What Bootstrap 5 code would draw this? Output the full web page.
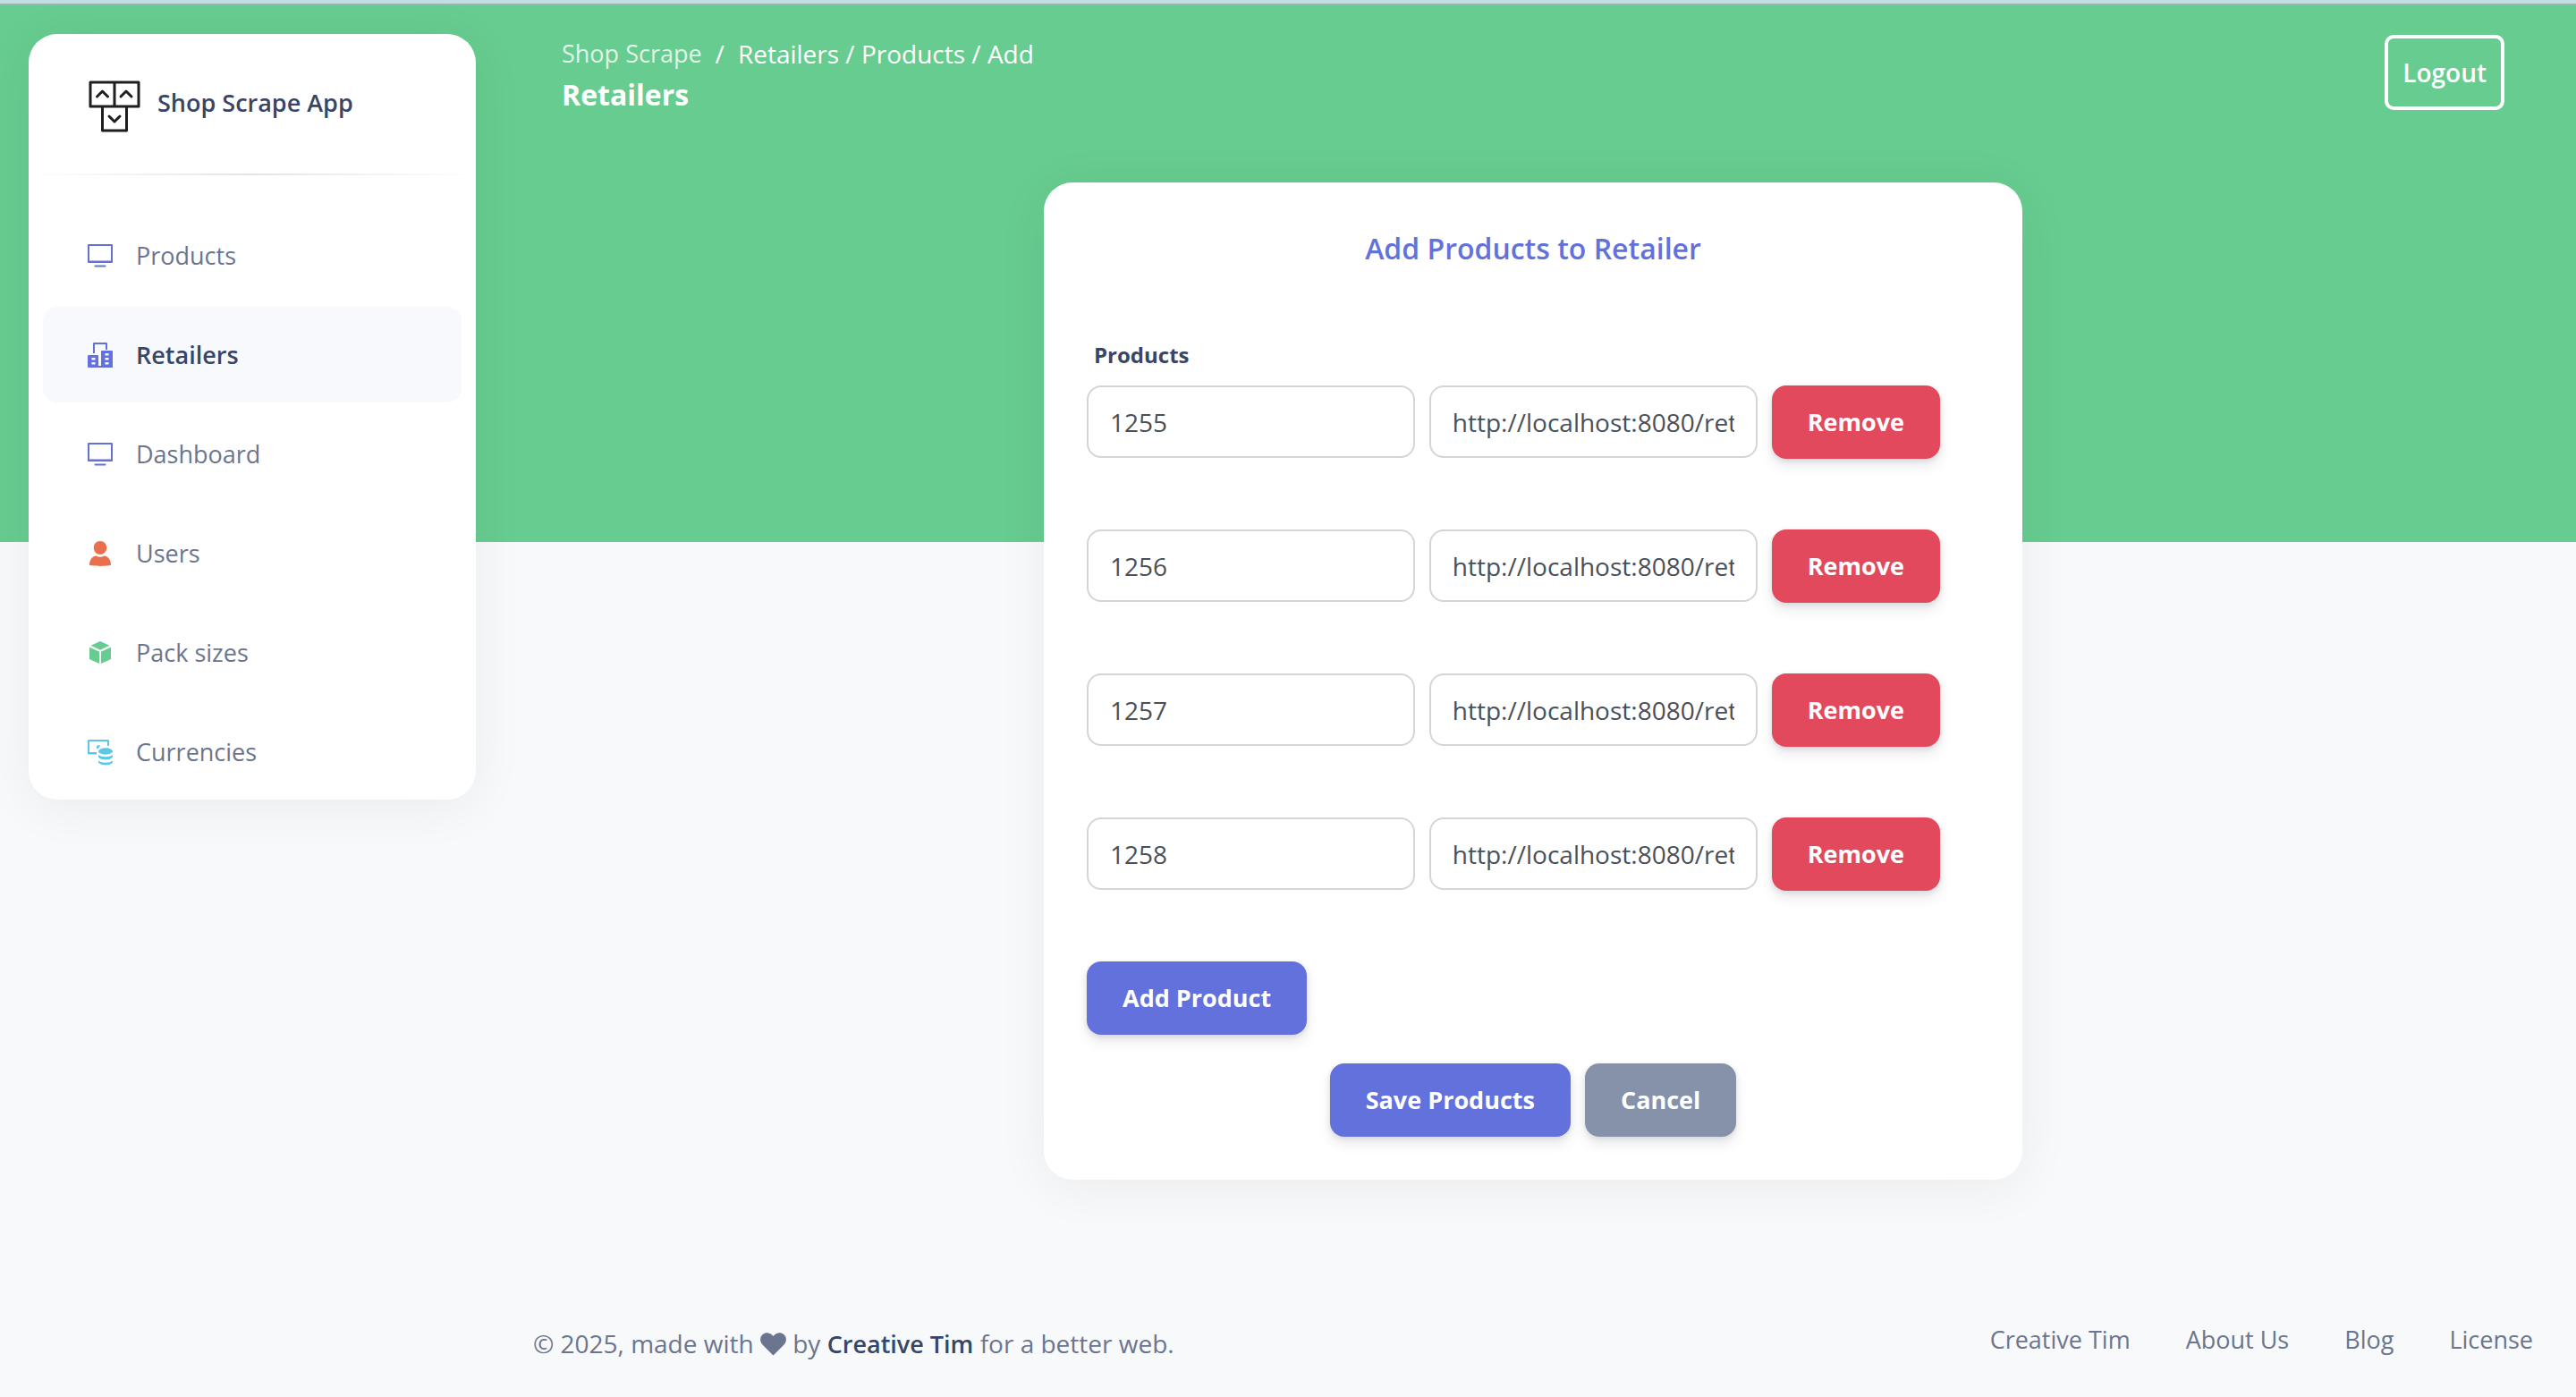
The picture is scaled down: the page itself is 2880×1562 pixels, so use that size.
<!DOCTYPE html>
<html lang="en">
<head>
<meta charset="utf-8">
<meta name="viewport" content="width=device-width, initial-scale=1">
<title>Shop Scrape App</title>
<link href="https://cdn.jsdelivr.net/npm/bootstrap@5.3.0/dist/css/bootstrap.min.css" rel="stylesheet">
<style>
:root{--ink:#384665;--muted:#6b758e;--indigo:#6371dc;--green:#67cc90}
body{font-family:"Open Sans","Noto Sans",sans-serif;font-size:28px;line-height:42px;color:var(--muted);background:#f8f9fb}
a{color:inherit;text-decoration:none}
.top-strip{height:6px;background:#bfdfe2;border-bottom:2px solid #9fb1b8}
.shell{background:linear-gradient(var(--green),var(--green)) 0 0/100% 600px no-repeat}
.soft-shadow{box-shadow:0 8px 60px rgba(0,0,0,.06)}
.side-panel{width:500px;margin:32px 16px 0 32px;border-radius:32px;flex-shrink:0}
.brand-link{padding:49px 64px 43px;gap:16px;color:var(--ink);font-size:27px;font-weight:600;line-height:56px}
.fade-rule{height:2px;background:linear-gradient(90deg,transparent,#e4e4e4,transparent)}
.side-nav{padding:36px 16px 0;gap:4px}
.side-nav .nav-link{display:flex;align-items:center;height:107px;padding:0 48px;gap:24px;border-radius:16px;font-size:27px;color:var(--muted)}
.side-nav .nav-link.active{background:#f8f9fd;color:var(--ink);font-weight:600}
.side-nav svg{width:32px;height:32px}
.page-head{padding:33px 80px 0}
.crumbs{gap:15px;line-height:42px}
.crumbs a{opacity:.8;font-size:27px}
.page-title{font-size:32px;font-weight:700;line-height:50px}
.logout-btn{border:4px solid #fff;border-radius:10px;color:#fff;font-size:28px;font-weight:600;line-height:44px;padding:16px}
.logout-btn:hover{background:#fff;color:var(--green)}
.content-area{padding:0 48px;margin-top:73px}
.content-area .row{--bs-gutter-x:24px;margin:0}
.panel{border-radius:32px;padding:48px}
.panel-title{font-size:32px;font-weight:600;line-height:52px;color:var(--indigo)}
.field-label{font-size:24px;font-weight:700;line-height:36px;color:var(--ink);margin:75px 0 16px 8px}
.product-row{gap:16px;margin-bottom:79px;padding-right:44px}
.product-row .form-control{flex:1 1 0;min-width:0;height:81px;border:2px solid #d2d6da;border-radius:16px;padding:0 24px;font-size:28px;color:#495057}
.action-btn{border:0;border-radius:16px;padding:20px 40px;font-size:27px;font-weight:700;line-height:42px;color:#fff;box-shadow:0 8px 14px rgba(50,50,93,.1),0 2px 6px rgba(0,0,0,.1)}
.action-btn:hover{color:#fff;opacity:.9}
.bg-indigo,.bg-indigo:hover{background:var(--indigo)}
.bg-rose,.bg-rose:hover{background:#e2495d}
.bg-slate,.bg-slate:hover{background:#8592a9}
.page-foot{padding:0 48px 28px;margin-top:158px}
.page-foot strong{font-size:27px;font-weight:600;color:var(--ink)}
.foot-nav{gap:62px;font-size:27px}
.heart{width:29px;height:26px;vertical-align:-3px}
</style>
</head>
<body>
<div class="top-strip"></div>
<div class="shell d-flex align-items-start">
  <aside class="side-panel bg-white soft-shadow">
    <a href="#" class="brand-link d-flex align-items-start">
      <svg width="64" height="64" viewBox="0 0 64 64" fill="none" stroke="#1e1e1e" stroke-width="3" stroke-linejoin="round" stroke-linecap="round" aria-hidden="true">
        <path d="M5 5h54v27H5zM32 5v27M18.500 32h27v27h-27z"/>
        <path d="M12.500 21l6-6 6 6M39 21l6-6 6 6M26 43l6 6 6-6"/>
      </svg>
      <span>Shop Scrape App</span>
    </a>
    <div class="fade-rule"></div>
    <ul class="side-nav nav flex-column">
      <li><a class="nav-link" href="#"><svg viewBox="0 0 32 32" fill="none" stroke="#6371dc" stroke-width="2" aria-hidden="true"><path d="M3 4h26v19H3z" stroke-linejoin="round"/><path d="M3 22.500h26M10.500 27.500h11" stroke-linecap="round"/></svg>Products</a></li>
      <li><a class="nav-link active" href="#" aria-current="page"><svg viewBox="0 0 32 32" fill="#6371dc" aria-hidden="true"><path fill-rule="evenodd" d="M8 14V3q0-1 1-1h14q1 0 1 1v7h-2V4H10v10zM3 16h10q1 0 1 1v11h3V12q0-1 1-1h11q1 0 1 1v18H3q-1 0-1-1V17q0-1 1-1zM6.500 19v2.500h4V19zM6.500 24v2.500h4V24zM21.500 14v2.500h4V14zM21.500 19v2.500h4V19zM21.500 24v2.500h4V24z"/></svg>Retailers</a></li>
      <li><a class="nav-link" href="#"><svg viewBox="0 0 32 32" fill="none" stroke="#6371dc" stroke-width="2" aria-hidden="true"><path d="M3 4h26v19H3z" stroke-linejoin="round"/><path d="M3 22.500h26M10.500 27.500h11" stroke-linecap="round"/></svg>Dashboard</a></li>
      <li><a class="nav-link" href="#"><svg viewBox="0 0 32 32" fill="#ea6f4d" aria-hidden="true"><path d="M16 2c4.500 0 7.200 3.200 7.200 7.500S20 17 16 17s-7.200-3.200-7.200-7.500S11.500 2 16 2zM11.500 18.500c3 1.700 6 1.700 9 0 4.500.5 7.500 5 7.500 10.300C24 30.300 8 30.300 4 28.800c0-5.300 3-9.800 7.500-10.300z"/></svg>Users</a></li>
      <li><a class="nav-link" href="#"><svg viewBox="0 0 32 32" fill="#66cc90" aria-hidden="true"><path d="M16 3l10.500 4.700-10.500 5-10.500-5zM4 9.500l11 5.200V28L4 23zM28 9.500l-11 5.200V28l11-5z"/></svg>Pack sizes</a></li>
      <li><a class="nav-link" href="#"><svg viewBox="0 0 32 32" fill="#5bc8ea" aria-hidden="true"><path d="M3 2h22q1 0 1 1v6h-2V4H4v12h8v2.500H3q-1 0-1-1V3q0-1 1-1z"/><path d="M16 8.500q-.5 2.500-3.500 4-1.500-3 .5-4 1.500-1 3 0z"/><ellipse cx="22" cy="15" rx="8" ry="3.700"/><path d="M14 19c4 3 12 3 16 0v2c-1 4.500-15 4.500-16 0zM14 25.500c4 3 12 3 16 0v1.500c-1 4.500-15 4.500-16 0z"/></svg>Currencies</a></li>
    </ul>
  </aside>
  <main class="flex-grow-1">
    <header class="page-head d-flex justify-content-between align-items-start text-white">
      <div>
        <nav aria-label="breadcrumb" class="crumbs d-flex"><a href="#">Shop Scrape</a><span>/</span><span>Retailers / Products / Add</span></nav>
        <h1 class="page-title mb-0">Retailers</h1>
      </div>
      <button type="button" class="btn logout-btn">Logout</button>
    </header>
    <div class="content-area">
      <div class="row justify-content-center">
        <div class="col-6">
          <form class="panel bg-white soft-shadow">
            <h2 class="panel-title text-center mb-0">Add Products to Retailer</h2>
            <label class="field-label d-block" for="p1">Products</label>
            <div class="product-row d-flex align-items-start"><input class="form-control" id="p1" type="text" value="1255"><input class="form-control" type="text" aria-label="Product link" value="http://localhost:8080/retailers"><button type="button" class="btn action-btn bg-rose">Remove</button></div>
            <div class="product-row d-flex align-items-start"><input class="form-control" type="text" aria-label="Product" value="1256"><input class="form-control" type="text" aria-label="Product link" value="http://localhost:8080/retailers"><button type="button" class="btn action-btn bg-rose">Remove</button></div>
            <div class="product-row d-flex align-items-start"><input class="form-control" type="text" aria-label="Product" value="1257"><input class="form-control" type="text" aria-label="Product link" value="http://localhost:8080/retailers"><button type="button" class="btn action-btn bg-rose">Remove</button></div>
            <div class="product-row d-flex align-items-start"><input class="form-control" type="text" aria-label="Product" value="1258"><input class="form-control" type="text" aria-label="Product link" value="http://localhost:8080/retailers"><button type="button" class="btn action-btn bg-rose">Remove</button></div>
            <div class="d-flex"><button type="button" class="btn action-btn bg-indigo">Add Product</button></div>
            <div class="d-flex justify-content-center gap-3 pt-4 mt-2"><button type="submit" class="btn action-btn bg-indigo">Save Products</button><button type="button" class="btn action-btn bg-slate">Cancel</button></div>
          </form>
        </div>
      </div>
    </div>
    <footer class="page-foot d-flex justify-content-between align-items-start">
      <div class="pt-1">© 2025, made with <svg class="heart" viewBox="0 0 29 26" fill="#6b758e" aria-hidden="true"><path d="M14.500 25.500L2.500 13.500C-.8 10-.6 4.800 2.700 2.100 6-.6 10.700 0 13.300 2.800l1.200 1.300 1.200-1.300C18.300 0 23-.6 26.300 2.100c3.300 2.700 3.500 7.900.2 11.400z"/></svg> by <a href="#"><strong>Creative Tim</strong></a> for a better web.</div>
      <nav class="foot-nav d-flex"><a href="#">Creative Tim</a><a href="#">About Us</a><a href="#">Blog</a><a href="#">License</a></nav>
    </footer>
  </main>
</div>
<script src="https://cdn.jsdelivr.net/npm/bootstrap@5.3.0/dist/js/bootstrap.bundle.min.js"></script>
</body>
</html>
